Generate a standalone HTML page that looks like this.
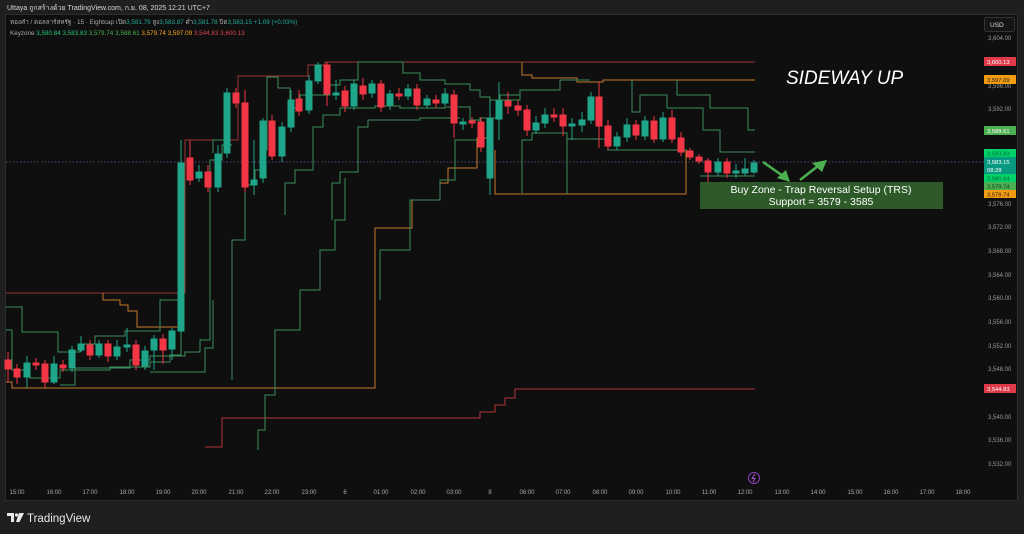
<!DOCTYPE html><html><head><meta charset="utf-8"><style>
html,body{margin:0;padding:0;background:#1f1f1f;width:1024px;height:534px;overflow:hidden}
svg{display:block}
text{font-family:"Liberation Sans","Noto Sans CJK SC",sans-serif}
</style></head><body>
<svg width="1024" height="534" viewBox="0 0 1024 534" xmlns="http://www.w3.org/2000/svg">
<rect width="1024" height="534" fill="#1f1f1f"/>
<text x="7" y="10" font-size="7" fill="#d8d8d8">Uttaya ถูกสร้างด้วย TradingView.com, ก.ย. 08, 2025 12:21 UTC+7</text>
<rect x="5.5" y="14.5" width="1012" height="486" fill="#0f0f0f" stroke="#2e2e2e"/>
<text x="10" y="24" font-size="6.3" fill="#aaa">ทองคำ / ดอลลาร์สหรัฐ · 15 · Eightcap  เปิด<tspan fill="#22ab94">3,581.79</tspan> สูง<tspan fill="#22ab94">3,583.87</tspan> ต่ำ<tspan fill="#22ab94">3,581.78</tspan> ปิด<tspan fill="#22ab94">3,583.15 +1.09 (+0.03%)</tspan></text>
<text x="10" y="35" font-size="6.3" fill="#aaa">Keyzone <tspan fill="#22c77a">3,580.84</tspan> <tspan fill="#22c77a">3,583.83</tspan> <tspan fill="#4caf50">3,579.74</tspan> <tspan fill="#4caf50">3,588.61</tspan> <tspan fill="#f5a623">3,579.74</tspan> <tspan fill="#f5a623">3,597.09</tspan> <tspan fill="#e0454f">3,544.83</tspan> <tspan fill="#e0454f">3,600.13</tspan></text>
<rect x="984.5" y="17.5" width="30" height="14" rx="2" fill="#151515" stroke="#333"/>
<text x="990" y="27" font-size="6.5" fill="#ddd">USD</text>
<g font-size="6" fill="#9a9a9a">
<text x="988" y="40">3,604.00</text><text x="988" y="88">3,596.00</text><text x="988" y="111">3,592.00</text><text x="988" y="206">3,576.00</text><text x="988" y="229">3,572.00</text><text x="988" y="253">3,568.00</text><text x="988" y="277">3,564.00</text><text x="988" y="300">3,560.00</text><text x="988" y="324">3,556.00</text><text x="988" y="348">3,552.00</text><text x="988" y="371">3,548.00</text><text x="988" y="419">3,540.00</text><text x="988" y="442">3,536.00</text><text x="988" y="466">3,532.00</text>
</g>
<line x1="6" y1="162" x2="984" y2="162" stroke="#6a5a9a" stroke-width="0.8" stroke-dasharray="1.5,2"/>
<g fill="none" stroke-width="1">
<path stroke="#9b3535" d="M6,293 H185 V140 H238 V76 H308 V65 H325 V62 H755"/>
<path stroke="#b03535" d="M205,447 H222 V418 H480 V412 H495 V405 H505 V398 H515 V389 H755"/>
<path stroke="#c57a2a" d="M522,62 V75 H532 V78 H577 V82 H603 V80 H755"/>
<path stroke="#c57a2a" d="M495,150 V194 H686 V150"/>
<path stroke="#c57a2a" d="M6,382 H12 V388 H375 V228 H412 V200 H440 V183 H448 V168 H477 V138 H487 V130"/>
<path stroke="#c57a2a" d="M103,293 V300 H120 V305 H128 V311 H137 V327 H180"/>
<path stroke="#3a8f58" d="M6,307 H22 V332 H58 V352 H80 V344 H95 V336 H125 V331 H160 V300 H178"/>
<path stroke="#3a8f58" d="M6,330 H12 V370 H30 V378 H60 V370 H110 V367 H150 V362 H170 V355 H181 V330"/>
<path stroke="#3a8f58" d="M60,385 H75 V368 H130 V360 H150 V356 H185 V352 H200 V340 H210 V160 H222 V145 H232"/>
<path stroke="#3a8f58" d="M213,153 V140 H230"/>
<path stroke="#3a8f58" d="M150,372 H205 V348 H213 V300"/>
<path stroke="#3a8f58" d="M232,380 V240 H245 V185 H255 V170 H262 V150 H267 V77 H278 V88 H290 V108 H300 V95 H330 V85 H340 V80 H358 V62 H403 V73 H420 V80 H445 V84 H470 V90 H480 V97 H490 V100 H520 V90 H560 V80 H590"/>
<path stroke="#3a8f58" d="M258,450 V430 H265 V395 H275 V330 H300 V290 H320 V250 H335 V220 H345 V178"/>
<path stroke="#3a8f58" d="M285,215 V183 H295 V170 H313 V127 H323 V115 H340 V108 H375 V106 H400 V108 H445 V107 H470 V120 H480"/>
<path stroke="#3a8f58" d="M332,220 V183 H340 V172 H358 V127 H368 V120 H420 V118 H460"/>
<path stroke="#3a8f58" d="M380,300 V250 H410 V200 H440 V180 H455 V140 H480 V118 H500 V95 H520 V100"/>
<path stroke="#3a8f58" d="M522,193 V140 H532 V133 H567 V194"/>
<path stroke="#3a8f58" d="M567,139 H605"/>
<path stroke="#3a8f58" d="M632,80 V112 H640 V95 H667 V108 H703 V130 H720 V152 H755"/>
<path stroke="#3a8f58" d="M677,80 V95 H710 V108 H748 V130 H755"/>
<path stroke="#3a8f58" d="M607,150 H687"/>
<path stroke="#3a8f58" d="M700,176 H755"/>
</g>
<g>
<g fill="#f23645" stroke="#f23645" stroke-width="1">
<line x1="8" y1="352" x2="8" y2="382"/><rect x="5" y="360" width="6" height="9"/>
<line x1="17" y1="364" x2="17" y2="384"/><rect x="14" y="369" width="6" height="8"/>
<line x1="36" y1="358" x2="36" y2="370"/><rect x="33" y="363" width="6" height="2"/>
<line x1="45" y1="360" x2="45" y2="388"/><rect x="42" y="364" width="6" height="18"/>
<line x1="63" y1="360" x2="63" y2="372"/><rect x="60" y="365" width="6" height="3"/>
<line x1="90" y1="340" x2="90" y2="360"/><rect x="87" y="345" width="6" height="10"/>
<line x1="108" y1="340" x2="108" y2="362"/><rect x="105" y="344" width="6" height="12"/>
<line x1="136" y1="340" x2="136" y2="370"/><rect x="133" y="345" width="6" height="20"/>
<line x1="163" y1="334" x2="163" y2="364"/><rect x="160" y="339" width="6" height="11"/>
<line x1="190" y1="140" x2="190" y2="185"/><rect x="187" y="158" width="6" height="22"/>
<line x1="208" y1="165" x2="208" y2="192"/><rect x="205" y="172" width="6" height="15"/>
<line x1="236" y1="88" x2="236" y2="108"/><rect x="233" y="93" width="6" height="10"/>
<line x1="245" y1="90" x2="245" y2="192"/><rect x="242" y="103" width="6" height="84"/>
<line x1="272" y1="115" x2="272" y2="160"/><rect x="269" y="121" width="6" height="35"/>
<line x1="299" y1="90" x2="299" y2="116"/><rect x="296" y="99" width="6" height="12"/>
<line x1="327" y1="62" x2="327" y2="106"/><rect x="324" y="65" width="6" height="29"/>
<line x1="345" y1="86" x2="345" y2="112"/><rect x="342" y="91" width="6" height="15"/>
<line x1="363" y1="78" x2="363" y2="100"/><rect x="360" y="86" width="6" height="8"/>
<line x1="381" y1="80" x2="381" y2="112"/><rect x="378" y="84" width="6" height="23"/>
<line x1="399" y1="88" x2="399" y2="100"/><rect x="396" y="94" width="6" height="2"/>
<line x1="417" y1="84" x2="417" y2="110"/><rect x="414" y="89" width="6" height="16"/>
<line x1="436" y1="95" x2="436" y2="108"/><rect x="433" y="100" width="6" height="3"/>
<line x1="454" y1="90" x2="454" y2="138"/><rect x="451" y="95" width="6" height="28"/>
<line x1="472" y1="117" x2="472" y2="128"/><rect x="469" y="121" width="6" height="2"/>
<line x1="481" y1="117" x2="481" y2="152"/><rect x="478" y="122" width="6" height="25"/>
<line x1="508" y1="92" x2="508" y2="114"/><rect x="505" y="101" width="6" height="5"/>
<line x1="518" y1="100" x2="518" y2="116"/><rect x="515" y="106" width="6" height="4"/>
<line x1="527" y1="105" x2="527" y2="136"/><rect x="524" y="110" width="6" height="20"/>
<line x1="554" y1="108" x2="554" y2="122"/><rect x="551" y="115" width="6" height="2"/>
<line x1="563" y1="108" x2="563" y2="136"/><rect x="560" y="115" width="6" height="11"/>
<line x1="599" y1="82" x2="599" y2="148"/><rect x="596" y="97" width="6" height="29"/>
<line x1="608" y1="120" x2="608" y2="150"/><rect x="605" y="126" width="6" height="20"/>
<line x1="636" y1="120" x2="636" y2="140"/><rect x="633" y="125" width="6" height="10"/>
<line x1="654" y1="116" x2="654" y2="143"/><rect x="651" y="121" width="6" height="18"/>
<line x1="672" y1="110" x2="672" y2="143"/><rect x="669" y="118" width="6" height="21"/>
<line x1="681" y1="132" x2="681" y2="156"/><rect x="678" y="138" width="6" height="14"/>
<line x1="690" y1="148" x2="690" y2="160"/><rect x="687" y="151" width="6" height="6"/>
<line x1="699" y1="154" x2="699" y2="164"/><rect x="696" y="157" width="6" height="4"/>
<line x1="708" y1="158" x2="708" y2="182"/><rect x="705" y="161" width="6" height="11"/>
<line x1="727" y1="158" x2="727" y2="178"/><rect x="724" y="162" width="6" height="11"/>
</g>
<g fill="#1fa58a" stroke="#1fa58a" stroke-width="1">
<line x1="27" y1="356" x2="27" y2="388"/><rect x="24" y="363" width="6" height="14"/>
<line x1="54" y1="356" x2="54" y2="384"/><rect x="51" y="364" width="6" height="18"/>
<line x1="72" y1="346" x2="72" y2="372"/><rect x="69" y="350" width="6" height="18"/>
<line x1="81" y1="336" x2="81" y2="352"/><rect x="78" y="344" width="6" height="6"/>
<line x1="99" y1="340" x2="99" y2="358"/><rect x="96" y="344" width="6" height="11"/>
<line x1="117" y1="340" x2="117" y2="360"/><rect x="114" y="347" width="6" height="9"/>
<line x1="127" y1="328" x2="127" y2="352"/><rect x="124" y="345" width="6" height="2"/>
<line x1="145" y1="346" x2="145" y2="370"/><rect x="142" y="351" width="6" height="15"/>
<line x1="154" y1="335" x2="154" y2="370"/><rect x="151" y="339" width="6" height="11"/>
<line x1="172" y1="328" x2="172" y2="360"/><rect x="169" y="331" width="6" height="18"/>
<line x1="181" y1="140" x2="181" y2="334"/><rect x="178" y="163" width="6" height="168"/>
<line x1="199" y1="165" x2="199" y2="182"/><rect x="196" y="172" width="6" height="6"/>
<line x1="218" y1="145" x2="218" y2="192"/><rect x="215" y="154" width="6" height="33"/>
<line x1="227" y1="88" x2="227" y2="158"/><rect x="224" y="93" width="6" height="60"/>
<line x1="254" y1="140" x2="254" y2="195"/><rect x="251" y="180" width="6" height="5"/>
<line x1="263" y1="118" x2="263" y2="183"/><rect x="260" y="121" width="6" height="57"/>
<line x1="282" y1="122" x2="282" y2="162"/><rect x="279" y="127" width="6" height="29"/>
<line x1="291" y1="90" x2="291" y2="132"/><rect x="288" y="100" width="6" height="27"/>
<line x1="309" y1="75" x2="309" y2="114"/><rect x="306" y="81" width="6" height="29"/>
<line x1="318" y1="62" x2="318" y2="84"/><rect x="315" y="65" width="6" height="16"/>
<line x1="336" y1="80" x2="336" y2="100"/><rect x="333" y="93" width="6" height="2"/>
<line x1="354" y1="80" x2="354" y2="110"/><rect x="351" y="84" width="6" height="22"/>
<line x1="372" y1="80" x2="372" y2="98"/><rect x="369" y="84" width="6" height="9"/>
<line x1="390" y1="90" x2="390" y2="110"/><rect x="387" y="94" width="6" height="11"/>
<line x1="408" y1="84" x2="408" y2="100"/><rect x="405" y="89" width="6" height="7"/>
<line x1="427" y1="95" x2="427" y2="108"/><rect x="424" y="99" width="6" height="6"/>
<line x1="445" y1="88" x2="445" y2="106"/><rect x="442" y="94" width="6" height="9"/>
<line x1="463" y1="118" x2="463" y2="130"/><rect x="460" y="122" width="6" height="2"/>
<line x1="490" y1="100" x2="490" y2="195"/><rect x="487" y="119" width="6" height="59"/>
<line x1="499" y1="82" x2="499" y2="140"/><rect x="496" y="101" width="6" height="18"/>
<line x1="536" y1="116" x2="536" y2="134"/><rect x="533" y="123" width="6" height="7"/>
<line x1="545" y1="108" x2="545" y2="128"/><rect x="542" y="115" width="6" height="8"/>
<line x1="572" y1="118" x2="572" y2="140"/><rect x="569" y="124" width="6" height="2"/>
<line x1="582" y1="112" x2="582" y2="132"/><rect x="579" y="120" width="6" height="5"/>
<line x1="591" y1="92" x2="591" y2="124"/><rect x="588" y="97" width="6" height="23"/>
<line x1="617" y1="132" x2="617" y2="150"/><rect x="614" y="137" width="6" height="9"/>
<line x1="627" y1="118" x2="627" y2="142"/><rect x="624" y="125" width="6" height="12"/>
<line x1="645" y1="116" x2="645" y2="140"/><rect x="642" y="121" width="6" height="15"/>
<line x1="663" y1="112" x2="663" y2="142"/><rect x="660" y="118" width="6" height="21"/>
<line x1="718" y1="158" x2="718" y2="176"/><rect x="715" y="162" width="6" height="10"/>
<line x1="736" y1="164" x2="736" y2="178"/><rect x="733" y="171" width="6" height="2"/>
<line x1="745" y1="158" x2="745" y2="176"/><rect x="742" y="169" width="6" height="4"/>
<line x1="754" y1="160" x2="754" y2="174"/><rect x="751" y="163" width="6" height="9"/>
</g>
</g>
<g font-size="5.8" fill="#fff">
<rect x="984" y="57" width="32" height="9" fill="#e03a4a"/><text x="987" y="64">3,600.13</text>
<rect x="984" y="75" width="32" height="9" fill="#f39c12"/><text x="987" y="82" fill="#222">3,597.09</text>
<rect x="984" y="126" width="32" height="9" fill="#4caf50"/><text x="987" y="133">3,588.61</text>
<rect x="984" y="149" width="32" height="8" fill="#00d26a"/><text x="987" y="155.5" fill="#063">3,583.83</text>
<rect x="984" y="157" width="32" height="17" fill="#089981"/><text x="987" y="164">3,583.15</text><text x="987" y="172">08:28</text>
<rect x="984" y="174" width="32" height="8" fill="#00d26a"/><text x="987" y="180.5" fill="#063">3,580.84</text>
<rect x="984" y="182" width="32" height="8" fill="#4caf50"/><text x="987" y="188.5" fill="#132">3,579.74</text>
<rect x="984" y="190" width="32" height="8" fill="#f39c12"/><text x="987" y="196.5" fill="#222">3,579.74</text>
<rect x="984" y="384" width="32" height="9" fill="#e03a4a"/><text x="987" y="391">3,544.83</text>
</g>
<text x="786" y="84" font-size="19" font-style="italic" fill="#fff">SIDEWAY UP</text>
<rect x="700" y="182" width="243" height="27" fill="#2e5a2a"/>
<text x="821" y="193" font-size="10.5" fill="#fff" text-anchor="middle">Buy Zone - Trap Reversal Setup (TRS)</text>
<text x="821" y="205" font-size="10.5" fill="#fff" text-anchor="middle">Support = 3579 - 3585</text>
<g stroke="#4caf50" stroke-width="2.5" fill="#4caf50">
<line x1="763" y1="162" x2="783" y2="176"/><polygon points="790,182 777,178 786,170" stroke="none"/>
<line x1="800" y1="180" x2="818" y2="166"/><polygon points="827,160 822,172 812,163" stroke="none"/>
</g>
<circle cx="754" cy="478" r="5.5" fill="none" stroke="#8e3fbf" stroke-width="1"/>
<path d="M755,474 L752,478.5 H755 L753,482" fill="none" stroke="#b25ae0" stroke-width="0.9"/>
<g font-size="6" fill="#a8a8a8" text-anchor="middle">
<text x="17" y="494">15:00</text><text x="54" y="494">16:00</text><text x="90" y="494">17:00</text><text x="127" y="494">18:00</text><text x="163" y="494">19:00</text><text x="199" y="494">20:00</text><text x="236" y="494">21:00</text><text x="272" y="494">22:00</text><text x="309" y="494">23:00</text><text x="345" y="494">6</text><text x="381" y="494">01:00</text><text x="418" y="494">02:00</text><text x="454" y="494">03:00</text><text x="490" y="494">8</text><text x="527" y="494">06:00</text><text x="563" y="494">07:00</text><text x="600" y="494">08:00</text><text x="636" y="494">09:00</text><text x="673" y="494">10:00</text><text x="709" y="494">11:00</text><text x="745" y="494">12:00</text><text x="782" y="494">13:00</text><text x="818" y="494">14:00</text><text x="855" y="494">15:00</text><text x="891" y="494">16:00</text><text x="927" y="494">17:00</text><text x="963" y="494">18:00</text>
</g>
<g fill="#e8e8e8">
<path d="M7,513 H14 V522 H11 V516 H7 Z"/><circle cx="16.5" cy="515" r="1.6"/><path d="M19,513 H24 L19.5,522 H16 Z"/>
</g>
<text x="27" y="522" font-size="11.5" fill="#e8e8e8">TradingView</text>
</svg>
</body></html>
